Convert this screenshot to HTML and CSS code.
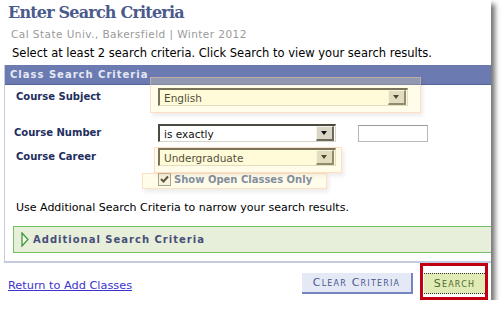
FILE: index.html
```html
<!DOCTYPE html>
<html>
<head>
<meta charset="utf-8">
<link rel="stylesheet" href="styles.css">
</head>
<body>
<div class="page">
  <h1 class="title">Enter Search Criteria</h1>
  <div class="campus"><span>Cal State Univ., Bakersfield | Winter 2012</span></div>
  <p class="instr">Select at least 2 search criteria. Click Search to view your search results.</p>

  <div class="criteria">
    <div class="bar">Class Search Criteria</div>
    <div class="form">
      <div class="row row-subject">
        <label class="lbl">Course Subject</label>
        <div class="select sel-wide sel-tint"><span class="val">English</span><span class="arrow"></span></div>
      </div>
      <div class="row row-number">
        <label class="lbl lbl-num">Course Number</label>
        <div class="select sel-mid"><span class="val">is exactly</span><span class="arrow"></span></div>
        <div class="textbox"></div>
      </div>
      <div class="row row-career">
        <label class="lbl">Course Career</label>
        <div class="select sel-mid sel-tint"><span class="val">Undergraduate</span><span class="arrow"></span></div>
      </div>
      <div class="row row-check">
        <span class="lbl"></span>
        <div class="check"><span class="box"><svg width="11" height="11" viewBox="0 0 11 11"><path d="M2 5 L4.5 7.5 L9 2.5" fill="none" stroke="#222" stroke-width="2"/></svg></span><span class="check-text">Show Open Classes Only</span></div>
      </div>
    </div>
    <p class="note">Use Additional Search Criteria to narrow your search results.</p>
    <div class="additional">
      <svg class="tri" width="8" height="15" viewBox="0 0 8 15"><path d="M1 1 L7 7.5 L1 14 Z" fill="#f4f8ec" stroke="#3f9a3a" stroke-width="1.3" stroke-linejoin="miter"/></svg>
      <span>Additional Search Criteria</span>
    </div>
  </div>

  <div class="footer">
    <a class="link" href="#">Return to Add Classes</a>
    <div class="buttons">
      <button class="btn btn-clear">Clear Criteria</button>
      <button class="btn btn-search">Search</button>
    </div>
  </div>

  <div class="hl hl-subject"></div>
  <div class="hl hl-career"></div>
  <div class="hl hl-check"></div>
  <div class="annot"></div>
</div>
</body>
</html>
```

FILE: styles.css
```css
html, body {
  margin: 0;
  padding: 0;
  background: #ffffff;
}
body {
  font-family: "DejaVu Sans", Verdana, sans-serif;
  font-size: 10px;
  color: #000;
}
.page {
  position: relative;
  width: 491px;
  height: 300px;
  background: #fff;
  box-shadow: 4px 4px 5px rgba(0, 0, 0, 0.55);
  overflow: visible;
}
.title {
  margin: 0;
  padding: 4px 0 0 8px;
  font-family: "DejaVu Serif", Georgia, serif;
  font-weight: bold;
  font-size: 16px;
  line-height: 18px;
  color: #4b5a8c;
  letter-spacing: -0.8px;
}
.campus {
  margin: 7px 0 0 11px;
  height: 11px;
  overflow: hidden;
  color: #9a9a9a;
  font-size: 10.5px;
  line-height: 14px;
  letter-spacing: 0.45px;
}
.campus span {
  display: block;
  margin-top: -2px;
}
.instr {
  margin: 6px 0 0 12px;
  font-size: 11.5px;
  line-height: 14px;
}
.criteria {
  margin: 5px 0 0 4px;
  border-left: 1px solid #c6cadf;
  border-bottom: 2px solid #c6cadf;
  padding-bottom: 8px;
}
.bar {
  height: 20px;
  background: #6b7bb1;
  color: #e6e9f4;
  font-weight: bold;
  font-size: 10px;
  line-height: 19px;
  letter-spacing: 1px;
  padding-left: 5px;
  border-bottom: 1px solid #54649a;
  box-sizing: border-box;
}
.form {
  padding-top: 3px;
}
.row {
  display: flex;
  align-items: center;
}
.lbl {
  width: 153px;
  padding-left: 11px;
  box-sizing: border-box;
  font-weight: bold;
  color: #1e2e5e;
  font-size: 10px;
  margin-top: -2px;
}
.lbl-num { padding-left: 9px; }
.row-number { margin-top: 18px; }
.row-career { margin-top: 6px; }
.row-check { margin-top: 6px; }
.select {
  display: flex;
  align-items: center;
  height: 18px;
  box-sizing: border-box;
  border-style: solid;
  border-width: 2px 1px 1px 2px;
  border-color: #4a4a40 #d8d6c8 #d8d6c8 #4a4a40;
  background: #fff;
  font-size: 10.5px;
}
.sel-tint { background: #fffde6; }
.sel-wide { width: 250px; }
.sel-mid { width: 178px; }
.val {
  flex: 1;
  padding-left: 4px;
  line-height: 14px;
  color: #111;
}
.arrow {
  width: 18px;
  height: 15px;
  box-sizing: border-box;
  background: #d9d6c6;
  border-style: solid;
  border-width: 1px 2px 2px 1px;
  border-color: #f6f4ea #6c6a5c #6c6a5c #f6f4ea;
  margin-right: 1px;
  position: relative;
}
.arrow::after {
  content: "";
  position: absolute;
  left: 4px;
  top: 4px;
  border-left: 3.5px solid transparent;
  border-right: 3.5px solid transparent;
  border-top: 4px solid #111;
}
.textbox {
  width: 70px;
  height: 17px;
  box-sizing: border-box;
  margin-left: 22px;
  border: 1px solid #b8b8b8;
  border-top-color: #999;
  background: #fff;
}
.check {
  display: flex;
  align-items: center;
  height: 14px;
}
.box {
  width: 11px;
  height: 11px;
  border: 1px solid #8a8a80;
  background: #f4f3ee;
  display: flex;
}
.check-text {
  margin-left: 3px;
  font-weight: bold;
  color: #586c98;
  font-size: 10px;
}
.note {
  margin: 15px 0 0 11px;
  font-size: 11px;
  line-height: 14px;
}
.additional {
  margin: 11px 0 0 8px;
  height: 27px;
  box-sizing: border-box;
  border: 1px solid #72c064;
  border-right: none;
  background: #e7eed9;
  display: flex;
  align-items: center;
  padding-left: 7px;
}
.tri { margin-right: 4px; }
.additional span {
  font-weight: bold;
  font-size: 10px;
  letter-spacing: 1px;
  color: #464e7a;
}
.footer {
  display: flex;
  justify-content: space-between;
  align-items: center;
  margin-top: 10px;
  padding: 0 6px 0 8px;
}
.link {
  color: #3a33d0;
  font-size: 11.3px;
  text-decoration: underline;
  margin-top: 3px;
}
.buttons {
  display: flex;
  gap: 11px;
}
.btn {
  height: 21px;
  font-family: "DejaVu Sans", Verdana, sans-serif;
  font-size: 11px;
  font-variant: small-caps;
  letter-spacing: 1.2px;
  padding: 0;
  cursor: pointer;
}
.btn-clear {
  width: 111px;
  background: #e5e9f5;
  color: #4a5790;
  border: none;
  border-right: 2px solid #7486c0;
  border-bottom: 2px solid #7486c0;
}
.btn-search {
  width: 61px;
  background: #e1ebb6;
  color: #4c6a2c;
  border: none;
  border-top: 1px dotted #333;
  border-bottom: 1px dotted #333;
}
.hl {
  position: absolute;
  background: rgba(255, 243, 173, 0.25);
  border: 1px solid rgba(250, 190, 150, 0.45);
  box-shadow: 2px 3px 4px rgba(0, 0, 0, 0.08);
  box-sizing: border-box;
}
.hl-subject { left: 150px; top: 77px; width: 271px; height: 36px; }
.hl-career { left: 154px; top: 147px; width: 188px; height: 26px; }
.hl-check { left: 142px; top: 173px; width: 185px; height: 16px; }
.annot {
  position: absolute;
  left: 420px;
  top: 263px;
  width: 68px;
  height: 37px;
  box-sizing: border-box;
  border: 3px solid #c00010;
}
```
